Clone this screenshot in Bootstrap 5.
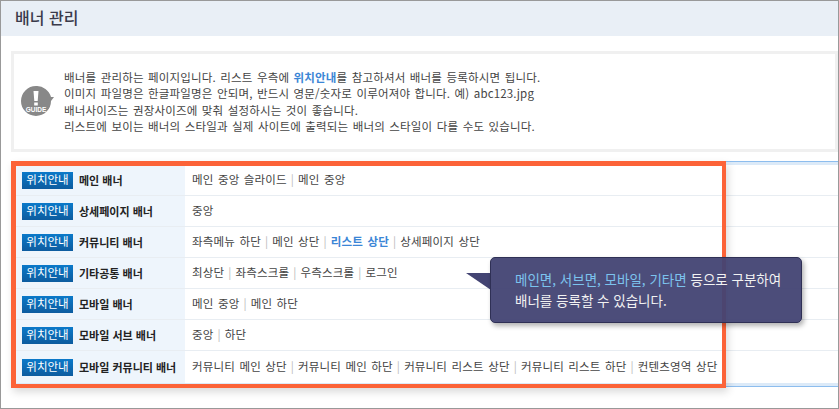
<!DOCTYPE html>
<html lang="ko">
<head>
    <meta charset="UTF-8">
    <meta name="viewport" content="width=device-width, initial-scale=1.0">
    <title>배너 관리</title>
    <link href="https://cdn.jsdelivr.net/npm/bootstrap@5.3.0/dist/css/bootstrap.min.css" rel="stylesheet">
    <style>
        body {
            background: #fff;
            font-family: "Noto Sans CJK KR", "Liberation Sans", sans-serif;
            font-size: 11px;
            color: #444;
        }
        .page-frame {
            height: 409px;
            border: 1px solid #999;
            overflow: hidden;
        }
        .page-head {
            height: 35px;
            padding-left: 14px;
            padding-bottom: 3px;
            background: #e9eff6;
            color: #3a3a4a;
            font-size: 16px;
            font-weight: 500;
        }
        .guide-box {
            height: 101px;
            margin: 15px 0 9px 10px;
            padding-left: 6px;
            border: 3px solid #f0f0f0;
            gap: 9px;
        }
        .guide-text {
            font-size: 11.5px;
            line-height: 16.5px;
            word-spacing: 1px;
            letter-spacing: .17px;
        }
        .guide-link { color: #3b86d6; font-weight: 700; }
        .banner-list {
            margin-left: 10px;
            border-top: 1px solid #8dbdee;
            border-bottom: 1px solid #8dbdee;
            padding-top: 3px;
            padding-bottom: 3px;
            background: #dceaf8;
        }
        .banner-row {
            height: 31px;
            background: #fff;
            border-bottom: 1px solid #e8edf2;
        }
        .banner-row:last-child { height: 32px; border-bottom: 0; }
        .banner-name {
            width: 174px;
            height: 100%;
            padding-left: 11px;
            gap: 6px;
            background: #eef5fc;
            color: #222;
            font-weight: 700;
        }
        .place-tag {
            width: 51px;
            height: 17px;
            background: linear-gradient(#0b79c9, #0d5c9f);
            color: #fff;
            font-size: 11.5px;
            font-weight: 400;
        }
        .banner-items {
            padding-left: 7px;
            font-size: 11.5px;
            word-spacing: 1px;
            letter-spacing: .17px;
        }
        .item-bar { margin: 0 4px; color: #bbb; }
        .item-on { color: #3b86d6; font-weight: 700; }
        .red-frame {
            left: 10px;
            top: 160px;
            width: 715px;
            height: 227px;
            border: 5px solid #fc6338;
            border-width: 5px 4px 4px 5px;
            box-shadow: 2px 4px 8px rgba(0, 0, 0, .15);
        }
        .note-box {
            left: 489px;
            top: 256px;
            width: 312px;
            height: 66px;
            padding-left: 24px;
            background: rgba(66, 67, 115, .95);
            border: 1px solid #2f3055;
            border-radius: 5px;
            color: #f2f2f2;
            font-size: 13.5px;
            line-height: 21px;
            box-shadow: 2px 3px 5px rgba(0, 0, 0, .3);
        }
        .note-tail {
            left: 465px;
            top: 272px;
        }
        .note-hl { color: #7cc3ee; }
    </style>
</head>
<body class="m-0">
    <div class="page-frame position-relative">
        <div class="page-head d-flex align-items-center">배너 관리</div>

        <!-- guide -->
        <div class="guide-box d-flex align-items-center">
            <svg width="35" height="31" viewBox="0 0 35 31" class="flex-shrink-0">
                <path d="M16 0a15 15 0 0 1 15 11l3 0-3 4A15 15 0 1 1 16 0z" fill="#888"/>
                <path d="M13.5 5h5l-.8 10h-3.4zM14.2 16.5h3.6v3h-3.6z" fill="#fff"/>
                <text x="16" y="26" text-anchor="middle" fill="#fff" font-size="6.5" font-weight="700" font-family="Liberation Sans">GUIDE</text>
            </svg>
            <div class="guide-text">
                배너를 관리하는 페이지입니다. 리스트 우측에 <span class="guide-link">위치안내</span>를 참고하셔서 배너를 등록하시면 됩니다.<br>
                이미지 파일명은 한글파일명은 안되며, 반드시 영문/숫자로 이루어져야 합니다. 예) abc123.jpg<br>
                배너사이즈는 권장사이즈에 맞춰 설정하시는 것이 좋습니다.<br>
                리스트에 보이는 배너의 스타일과 실제 사이트에 출력되는 배너의 스타일이 다를 수도 있습니다.
            </div>
        </div>

        <!-- banner list -->
        <div class="banner-list">
            <div class="banner-row d-flex align-items-center">
                <div class="banner-name d-flex align-items-center"><span class="place-tag d-flex align-items-center justify-content-center">위치안내</span>메인 배너</div>
                <div class="banner-items">메인 중앙 슬라이드<span class="item-bar">|</span>메인 중앙</div>
            </div>
            <div class="banner-row d-flex align-items-center">
                <div class="banner-name d-flex align-items-center"><span class="place-tag d-flex align-items-center justify-content-center">위치안내</span>상세페이지 배너</div>
                <div class="banner-items">중앙</div>
            </div>
            <div class="banner-row d-flex align-items-center">
                <div class="banner-name d-flex align-items-center"><span class="place-tag d-flex align-items-center justify-content-center">위치안내</span>커뮤니티 배너</div>
                <div class="banner-items">좌측메뉴 하단<span class="item-bar">|</span>메인 상단<span class="item-bar">|</span><span class="item-on">리스트 상단</span><span class="item-bar">|</span>상세페이지 상단</div>
            </div>
            <div class="banner-row d-flex align-items-center">
                <div class="banner-name d-flex align-items-center"><span class="place-tag d-flex align-items-center justify-content-center">위치안내</span>기타공통 배너</div>
                <div class="banner-items">최상단<span class="item-bar">|</span>좌측스크롤<span class="item-bar">|</span>우측스크롤<span class="item-bar">|</span>로그인</div>
            </div>
            <div class="banner-row d-flex align-items-center">
                <div class="banner-name d-flex align-items-center"><span class="place-tag d-flex align-items-center justify-content-center">위치안내</span>모바일 배너</div>
                <div class="banner-items">메인 중앙<span class="item-bar">|</span>메인 하단</div>
            </div>
            <div class="banner-row d-flex align-items-center">
                <div class="banner-name d-flex align-items-center"><span class="place-tag d-flex align-items-center justify-content-center">위치안내</span>모바일 서브 배너</div>
                <div class="banner-items">중앙<span class="item-bar">|</span>하단</div>
            </div>
            <div class="banner-row d-flex align-items-center">
                <div class="banner-name d-flex align-items-center"><span class="place-tag d-flex align-items-center justify-content-center">위치안내</span>모바일 커뮤니티 배너</div>
                <div class="banner-items">커뮤니티 메인 상단<span class="item-bar">|</span>커뮤니티 메인 하단<span class="item-bar">|</span>커뮤니티 리스트 상단<span class="item-bar">|</span>커뮤니티 리스트 하단<span class="item-bar">|</span>컨텐츠영역 상단</div>
            </div>
        </div>

        <!-- annotation -->
        <div class="red-frame position-absolute"></div>
        <svg class="note-tail position-absolute" width="26" height="18" viewBox="0 0 26 18">
            <path d="M0 0H25V17z" fill="#434473" stroke="none"/>
        </svg>
        <div class="note-box position-absolute d-flex align-items-center">
            <div><span class="note-hl">메인면, 서브면, 모바일, 기타면</span> 등으로 구분하여<br>배너를 등록할 수 있습니다.</div>
        </div>
    </div>
    <script src="https://cdn.jsdelivr.net/npm/bootstrap@5.3.0/dist/js/bootstrap.bundle.min.js"></script>
</body>
</html>
